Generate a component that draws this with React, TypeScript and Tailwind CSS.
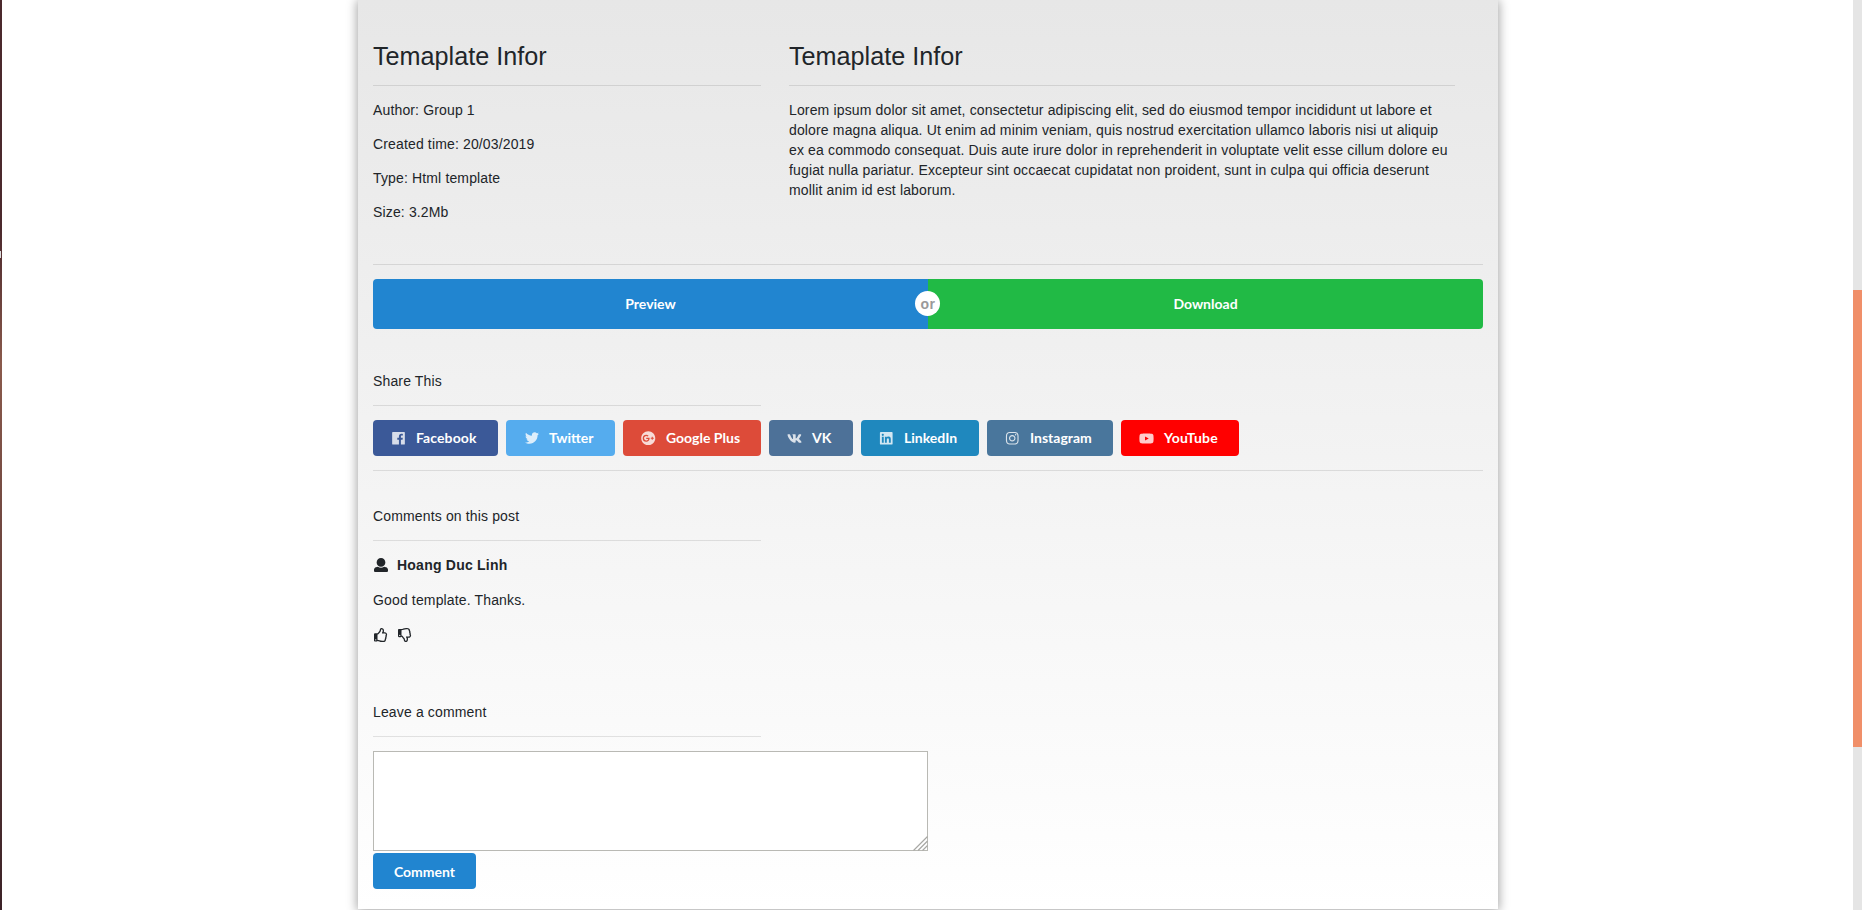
import type { ReactNode } from "react";
import {
  FaTwitter,
  FaGooglePlus,
  FaVk,
  FaLinkedin,
  FaInstagram,
  FaYoutube,
  FaRegThumbsUp,
  FaRegThumbsDown,
} from "react-icons/fa";

function FacebookIcon() {
  return (
    <svg viewBox="0 0 448 512" className="h-[14.5px] w-[13px]" fill="currentColor">
      <path d="M448 56.7v398.5c0 13.7-11.1 24.7-24.7 24.7H309.1V306.5h58.2l8.7-67.6h-67v-43.2c0-19.6 5.4-32.9 33.5-32.9h35.8v-60.5c-6.2-.8-27.4-2.7-52.2-2.7-51.6 0-87 31.5-87 89.4v49.9h-58.4v67.6h58.4V480H24.7C11.1 480 0 468.9 0 455.3V56.7C0 43.1 11.1 32 24.7 32h398.5c13.7 0 24.8 11.1 24.8 24.7z" />
    </svg>
  );
}

function UserIcon() {
  return (
    <svg viewBox="0 0 512 512" className="size-[14px]" fill="currentColor">
      <path d="M256 0c88.366 0 160 71.634 160 160s-71.634 160-160 160S96 248.366 96 160 167.634 0 256 0zm183.283 333.821l-71.313-17.828c-74.923 53.89-165.738 41.864-223.94 0l-71.313 17.828C29.981 344.505 0 382.903 0 426.955V464c0 26.51 21.49 48 48 48h416c26.51 0 48-21.49 48-48v-37.045c0-44.052-29.981-82.45-72.717-93.134z" />
    </svg>
  );
}

const networks: { label: string; style: string; icon: ReactNode }[] = [
  { label: "Facebook", style: "w-[125px] bg-[#3b5998] tracking-[0.1px]", icon: <FacebookIcon /> },
  { label: "Twitter", style: "w-[109px] bg-[#55acee]", icon: <FaTwitter size={14} /> },
  { label: "Google Plus", style: "w-[138px] bg-[#dd4b39]", icon: <FaGooglePlus size={14.5} /> },
  { label: "VK", style: "w-[84px] bg-[#4d7198]", icon: <FaVk size={15} /> },
  { label: "LinkedIn", style: "w-[118px] bg-[#1f88be]", icon: <FaLinkedin size={14.5} /> },
  { label: "Instagram", style: "w-[126px] bg-[#49769c]", icon: <FaInstagram size={14.5} /> },
  { label: "YouTube", style: "w-[118px] bg-[#ff0000] tracking-[0.2px]", icon: <FaYoutube size={15} /> },
];

function Rule({ className = "" }: { className?: string }) {
  return <hr className={`border-0 h-px bg-black/10 ${className}`} />;
}

function SectionTitle({ children }: { children: ReactNode }) {
  return (
    <>
      <p>{children}</p>
      <Rule className="mt-[14px] w-[388px]" />
    </>
  );
}

export default function App() {
  return (
    <div className="flex h-[910px] w-[1862px] overflow-hidden bg-white font-['Liberation_Sans',Arial,sans-serif] text-sm leading-5 tracking-[0.145px] text-[#212529]">
      <div className="flex w-[2px] flex-col bg-linear-to-b from-[#4b292d] from-25% via-[#8a5a4c] via-40% to-[#3b2227]">
        <div className="mt-[251px] h-[7px] w-px bg-[#dddddd]" />
      </div>
      <main className="flex flex-1 pl-[356px]">
        <section className="h-[909px] w-[1140px] bg-linear-to-b from-[#e7e7e7] to-white px-[15px] shadow-[0_1px_10px_1px_rgba(0,0,0,0.36)]">
          <div className="flex h-[264px] gap-[28px] pt-[42px]">
            <div className="w-[388px]">
              <h2 className="text-[25.2px] leading-[29px] tracking-normal">Temaplate Infor</h2>
              <Rule className="mt-[14px]" />
              <div className="mt-[14px] flex flex-col gap-[14px]">
                <p>Author: Group 1</p>
                <p>Created time: 20/03/2019</p>
                <p>Type: Html template</p>
                <p>Size: 3.2Mb</p>
              </div>
            </div>
            <div className="w-[666px]">
              <h2 className="text-[25.2px] leading-[29px] tracking-normal">Temaplate Infor</h2>
              <Rule className="mt-[14px]" />
              <p className="mt-[14px]">
                Lorem ipsum dolor sit amet, consectetur adipiscing elit, sed do eiusmod tempor incididunt ut labore et
                dolore magna aliqua. Ut enim ad minim veniam, quis nostrud exercitation ullamco laboris nisi ut aliquip
                ex ea commodo consequat. Duis aute irure dolor in reprehenderit in voluptate velit esse cillum dolore eu
                fugiat nulla pariatur. Excepteur sint occaecat cupidatat non proident, sunt in culpa qui officia
                deserunt mollit anim id est laborum.
              </p>
            </div>
          </div>
          <Rule />
          <div className="relative mt-[14px] flex h-[50px] overflow-hidden rounded font-[Lato,sans-serif] font-bold tracking-normal text-white">
            <button className="flex-1 bg-[#2185d0]">Preview</button>
            <button className="flex-1 bg-[#21ba45]">Download</button>
            <span className="absolute left-[542px] top-3 flex size-[25px] items-center justify-center rounded-full bg-white pl-px font-['Liberation_Sans',sans-serif] tracking-[0.4px] text-[#999999]">
              or
            </span>
          </div>
          <div className="mt-[42px]">
            <SectionTitle>Share This</SectionTitle>
          </div>
          <div className="mt-[14px] flex gap-2 tracking-normal">
            {networks.map((n) => (
              <button
                key={n.label}
                className={`flex h-9 items-center rounded pl-[17px] font-[Lato,sans-serif] font-bold text-white ${n.style}`}
              >
                <span className="mr-[9px] flex w-[17px] justify-center opacity-80">{n.icon}</span>
                {n.label}
              </button>
            ))}
          </div>
          <Rule className="mt-[14px]" />
          <div className="mt-[35px]">
            <SectionTitle>Comments on this post</SectionTitle>
          </div>
          <div className="mt-[14px] flex items-center pl-px">
            <UserIcon />
            <span className="ml-[9px] font-bold tracking-[0.23px]">Hoang Duc Linh</span>
          </div>
          <p className="mt-[15px]">Good template. Thanks.</p>
          <div className="mt-[15px] flex h-5 items-center gap-[10px] pl-px">
            <FaRegThumbsUp size={14} />
            <FaRegThumbsDown size={14} />
          </div>
          <div className="mt-[57px]">
            <SectionTitle>Leave a comment</SectionTitle>
          </div>
          <div className="relative mt-[14px] h-[100px] w-[555px]">
            <textarea className="block size-full resize-none border border-[#b9b9b4] bg-white" />
            <svg
              className="pointer-events-none absolute bottom-0 right-0 size-[15px]"
              viewBox="0 0 15 15"
              stroke="#a8a8a4"
              strokeWidth="1.2"
            >
              <path d="M0.5 14.5L14.5 0.5M5 14.5L14.5 5M9.5 14.5L14.5 9.5" />
            </svg>
          </div>
          <button className="mt-[2px] h-9 w-[103px] rounded bg-[#2185d0] pt-px font-[Lato,sans-serif] font-bold tracking-normal text-white">
            Comment
          </button>
        </section>
      </main>
      <div className="w-[9px] bg-[#e5e5e5] pt-[290px]">
        <div className="h-[457px] bg-[#f08f69]" />
      </div>
    </div>
  );
}
